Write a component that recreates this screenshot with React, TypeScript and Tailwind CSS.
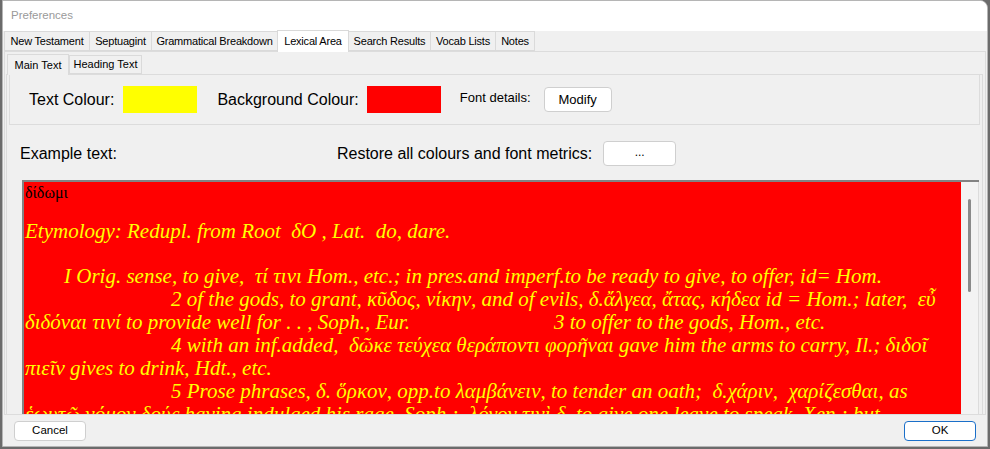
import React from 'react';

const ui = { fontFamily: '"Liberation Sans", Arial, sans-serif' };
const serif = { fontFamily: '"Liberation Serif", "DejaVu Serif", serif' };

const tabs = [
    { label: 'New Testament', w: 'w-[86px]' },
    { label: 'Septuagint', w: 'w-[63px]' },
    { label: 'Grammatical Breakdown', w: 'w-[127px]' },
    { label: 'Lexical Area', w: 'w-[72px]', active: true },
    { label: 'Search Results', w: 'w-[83px]' },
    { label: 'Vocab Lists', w: 'w-[66px]' },
    { label: 'Notes', w: 'w-[40px]' },
];

function Tab({ label, w, active }: { label: string; w: string; active?: boolean }) {
    if (active) {
        return (
            <div className={`${w} h-[22px] -mt-[2px] -mb-[1px] -ml-px bg-white border border-b-0 border-[#d9d9d9] flex items-center justify-center whitespace-nowrap tracking-[-0.2px] text-[11px] text-black z-10`}>
                {label}
            </div>
        );
    }
    return (
        <div className={`${w} h-[20px] bg-[#f0f0f0] border border-[#dadada] -ml-px first:ml-0 flex items-center justify-center whitespace-nowrap tracking-[-0.2px] text-[11px] text-black`}>
            {label}
        </div>
    );
}

export default function App() {
    return (
        <div className="w-[990px] h-[449px] bg-[#6b6b6b] overflow-hidden" style={ui}>
            <div className="ml-[2px] w-[986px] h-[447px] bg-[#f0f0f0] border border-[#b5b5b5] rounded-tr-[8px] overflow-hidden flex flex-col">
                {/* title bar */}
                <div className="h-[30px] shrink-0 bg-white flex items-center pl-[8px] text-[11.5px] text-[#9a9a9a]">
                    Preferences
                </div>

                {/* main tabs */}
                <div className="flex items-end pl-[1px] h-[20px] shrink-0">
                    {tabs.map((t) => (
                        <Tab key={t.label} {...t} />
                    ))}
                </div>

                <div className="mx-[1px] flex-1 border border-[#dcdcdc] bg-[#f0f0f0] flex flex-col pt-[1px] min-h-0">
                    {/* sub tabs */}
                    <div className="flex items-end pl-[2px] h-[21px] shrink-0">
                        <div className="w-[62px] h-[21px] bg-[#f0f0f0] border border-b-0 border-[#dadada] flex items-center justify-center whitespace-nowrap text-[11px] z-10 -mb-px">
                            Main Text
                        </div>
                        <div className="w-[73px] h-[19px] bg-[#f0f0f0] border border-[#dadada] flex items-center justify-center whitespace-nowrap text-[11px]">
                            Heading Text
                        </div>
                    </div>

                    <div className="ml-[1px] mr-[2px] flex-1 border border-[#dcdcdc] border-b-0 flex flex-col min-h-0">
                        {/* colour group */}
                        <div className="mx-[2px] h-[50px] shrink-0 border border-[#dcdcdc] border-t-0 flex items-center">
                            <span className="ml-[19px] text-[16px] text-black">Text Colour:</span>
                            <div className="ml-[9px] w-[74px] h-[27px] bg-[#ffff00]" />
                            <span className="ml-[20px] text-[16px] text-black">Background Colour:</span>
                            <div className="ml-[8px] w-[74px] h-[27px] bg-[#ff0000]" />
                            <span className="ml-[19px] -mt-[3px] text-[13px] text-black">Font details:</span>
                            <button className="ml-[13px] w-[68px] h-[25px] bg-white border border-[#cfcfcf] rounded-[4px] text-[13px] text-black">
                                Modify
                            </button>
                        </div>

                        {/* example row */}
                        <div className="h-[55px] shrink-0 flex items-center pt-[2px]">
                            <span className="ml-[13px] text-[16px] text-black">Example text:</span>
                            <span className="ml-[220px] text-[16px] text-black">Restore all colours and font metrics:</span>
                            <button className="ml-[11px] w-[73px] h-[25px] bg-white border border-[#cfcfcf] rounded-[4px] text-[12px] text-black leading-none pb-[4px]">
                                ...
                            </button>
                        </div>

                        {/* example rich text box */}
                        <div className="ml-[15px] mr-[3px] flex-1 flex border-t-2 border-l-2 border-[#838383] overflow-hidden min-h-0">
                            <div className="flex-1 bg-[#ff0000] pl-[1px] pt-[2px] overflow-hidden whitespace-pre" style={serif}>
                                <div className="text-[16px] leading-[18px] text-black">δίδωμι</div>
                                <div className="text-[21px] leading-[23px] italic text-[#ffff00]">
                                    <div className="mt-[18px]">Etymology: Redupl. from Root  δO , Lat.  do, dare.</div>
                                    <div className="mt-[22px] pl-[39px]">I Orig. sense, to give,  τί τινι Hom., etc.; in pres.and imperf.to be ready to give, to offer, id= Hom.</div>
                                    <div className="pl-[146px]">2 of the gods, to grant, κῦδος, νίκην, and of evils, δ.ἄλγεα, ἄτας, κήδεα id = Hom.; later,  εὖ</div>
                                    <div className="flex">
                                        <span className="w-[529px]">διδόναι τινί to provide well for . . , Soph., Eur.</span>
                                        <span>3 to offer to the gods, Hom., etc.</span>
                                    </div>
                                    <div className="pl-[146px]">4 with an inf.added,  δῶκε τεύχεα θεράποντι φορῆναι gave him the arms to carry, Il.; διδοῖ</div>
                                    <div>πιεῖν gives to drink, Hdt., etc.</div>
                                    <div className="pl-[146px]">5 Prose phrases, δ. ὅρκον, opp.to λαμβάνειν, to tender an oath;  δ.χάριν,  χαρίζεσθαι, as</div>
                                    <div>ἑωυτῷ νόμον δούς having indulged his rage, Soph.;  λόγον τινὶ δ. to give one leave to speak, Xen.; but</div>
                                </div>
                            </div>
                            {/* scrollbar */}
                            <div className="w-[18px] shrink-0 bg-[#f3f3f3] border-r border-[#dcdcdc] pt-[17px] flex justify-center">
                                <div className="w-[3px] h-[93px] bg-[#8a8a8a] rounded-full" />
                            </div>
                        </div>
                    </div>
                </div>

                {/* footer */}
                <div className="h-[31px] shrink-0 flex items-start justify-between px-[11px] pt-[6px]">
                    <button className="w-[72px] h-[20px] bg-white border border-[#cfcfcf] rounded-[4px] text-[11.5px] text-black">
                        Cancel
                    </button>
                    <button className="w-[72px] h-[20px] bg-white border border-[#1a6fc9] rounded-[4px] text-[11.5px] text-black">
                        OK
                    </button>
                </div>
            </div>
        </div>
    );
}
